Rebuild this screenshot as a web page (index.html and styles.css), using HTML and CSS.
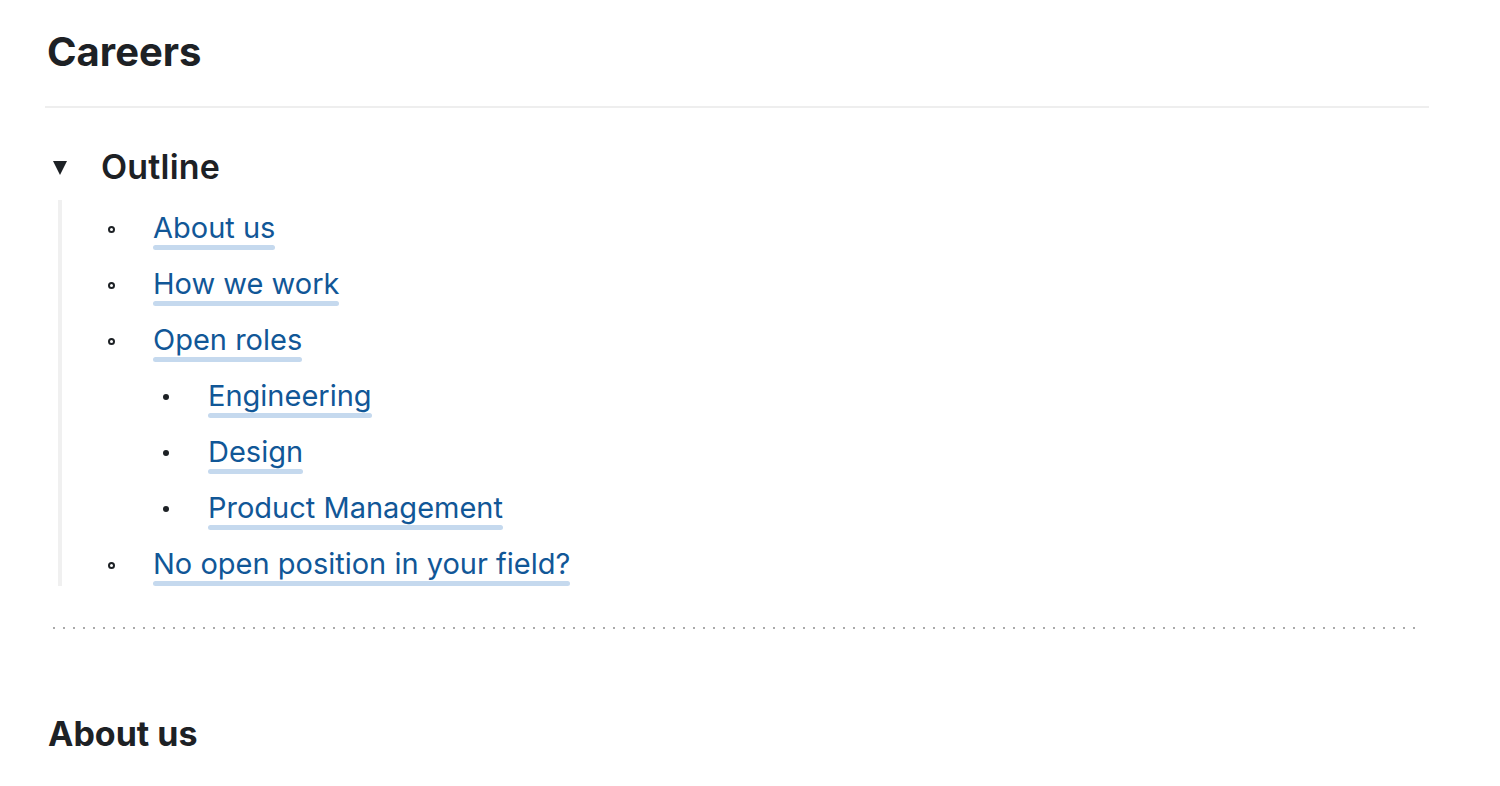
FILE: index.html
```html
<!DOCTYPE html>
<html lang="en">
<head>
    <meta charset="UTF-8">
    <meta name="viewport" content="width=device-width, initial-scale=1.0">
    <title>Careers</title>
    <link rel="stylesheet" href="styles.css">
</head>
<body>
    <main class="page">
        <h1 class="title">Careers</h1>
        <hr class="rule">

        <details class="toc" open>
            <summary class="toc-summary">
                <svg class="toc-arrow" width="16" height="16" viewBox="0 0 16 16">
                    <polygon points="1,2 15,2 8,16" fill="#1d2125"/>
                </svg>
                <span>Outline</span>
            </summary>
            <ul class="outline">
                <li><a href="#about">About us</a></li>
                <li><a href="#how">How we work</a></li>
                <li>
                    <a href="#roles">Open roles</a>
                    <ul class="outline-sub">
                        <li><a href="#engineering">Engineering</a></li>
                        <li><a href="#design">Design</a></li>
                        <li><a href="#product">Product Management</a></li>
                    </ul>
                </li>
                <li><a href="#other">No open position in your field?</a></li>
            </ul>
        </details>

        <div class="dots"></div>

        <h2 class="section-title" id="about">About us</h2>
    </main>
</body>
</html>
```

FILE: styles.css
```css
body {
    margin: 0;
    font-family: Inter, "Noto Sans", sans-serif;
    color: #1d2125;
    background-color: #fff;
}

.page {
    padding: 0 71px 0 45px;
}

.title {
    margin: 28px 0 0;
    padding-left: 2px;
    font-size: 40px;
    line-height: 48px;
    font-weight: 700;
}

.rule {
    margin: 30px 0 0;
    border: none;
    height: 2px;
    background-color: #eeeeee;
}

.toc {
    margin-top: 39px;
}

.toc-summary {
    display: flex;
    align-items: center;
    list-style: none;
    padding-left: 7px;
    gap: 33px;
    font-size: 34px;
    line-height: 40px;
    font-weight: 600;
    letter-spacing: 0.2px;
    cursor: pointer;
}

.toc-summary::-webkit-details-marker {
    display: none;
}

.toc-arrow {
    flex-shrink: 0;
}

.outline {
    list-style: none;
    margin: 13px 0 0 13px;
    padding: 0;
    border-left: 4px solid #f0f0f0;
}

.outline-sub {
    list-style: none;
    margin: 0;
    padding: 0;
    grid-column: 2;
}

.outline li {
    display: grid;
    grid-template-columns: 7px auto;
    column-gap: 35px;
    margin-top: 6px;
    padding-left: 46px;
}

.outline > li:first-child {
    margin-top: 0;
}

.outline li::before {
    content: "";
    width: 3px;
    height: 3px;
    margin-top: 26px;
    border: 2px solid #1d2125;
    border-radius: 50%;
}

.outline-sub li {
    padding-left: 13px;
}

.outline-sub li::before {
    width: 6px;
    height: 6px;
    border: none;
    background-color: #1d2125;
}

.outline a {
    grid-column: 2;
    justify-self: start;
    margin-top: 11px;
    padding: 0 3px;
    font-size: 29px;
    line-height: 34px;
    color: #115797;
    text-decoration: none;
}

.outline a::after {
    content: "";
    display: block;
    height: 5px;
    border-radius: 3px;
    background-color: #c5d9ee;
}

.dots {
    margin: 41px 9px 0 8px;
    height: 2px;
    background-image: linear-gradient(to right, #aaaaaa 2px, transparent 2px);
    background-size: 10px 2px;
}

.section-title {
    margin: 85px 0 0 3px;
    font-size: 34px;
    line-height: 40px;
    font-weight: 700;
}
```
